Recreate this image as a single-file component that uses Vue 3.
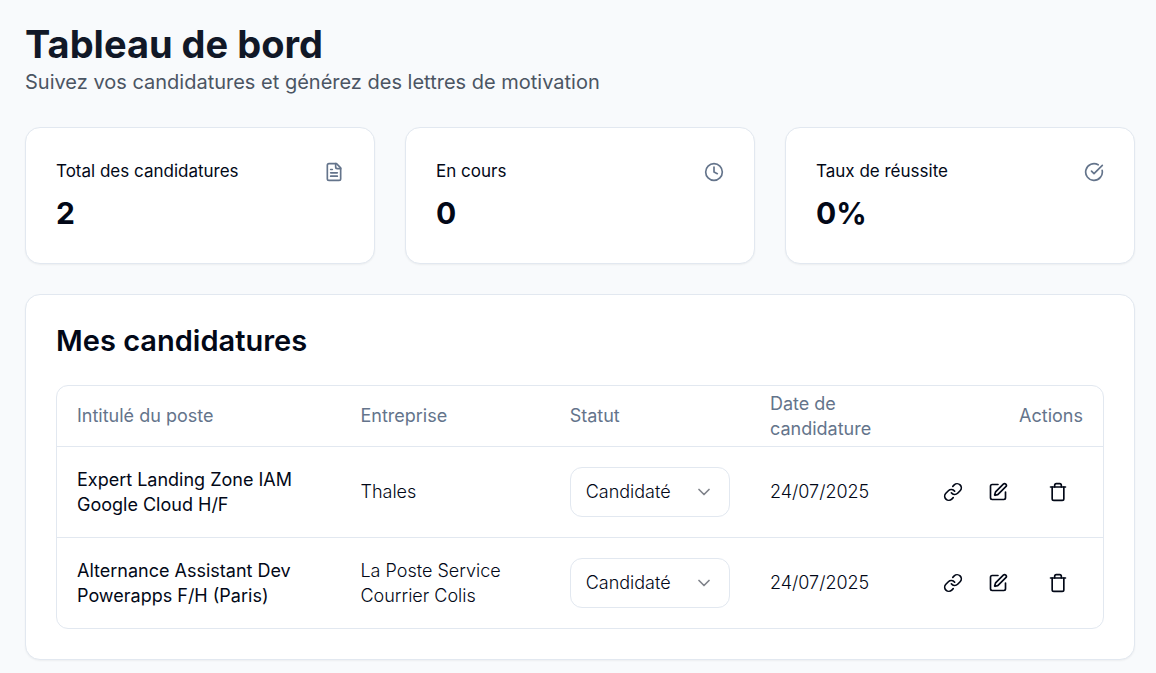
<script setup>
import { ref } from 'vue'
const stats = [
  { label: 'Total des candidatures', value: '2', icon: 'file' },
  { label: 'En cours', value: '0', icon: 'clock' },
  { label: 'Taux de réussite', value: '0%', icon: 'check' },
]
const rows = ref([
  { id: 1, title: 'Expert Landing Zone IAM Google Cloud H/F', company: 'Thales', status: 'Candidaté', date: '24/07/2025' },
  { id: 2, title: 'Alternance Assistant Dev Powerapps F/H (Paris)', company: 'La Poste Service Courrier Colis', status: 'Candidaté', date: '24/07/2025' },
])
const statuses = ['Candidaté', 'Entretien', 'Refusé']
</script>

<template>
  <main class="page">
    <header>
      <h1>Tableau de bord</h1>
      <p class="subtitle">Suivez vos candidatures et générez des lettres de motivation</p>
    </header>
    <section class="stats">
      <article v-for="s in stats" :key="s.label" class="card stat">
        <div class="stat-head">
          <h2>{{ s.label }}</h2>
          <svg class="icon muted" viewBox="0 0 24 24">
            <template v-if="s.icon === 'file'">
              <path d="M15 2H6a2 2 0 0 0-2 2v16a2 2 0 0 0 2 2h12a2 2 0 0 0 2-2V7Z" />
              <path d="M14 2v4a2 2 0 0 0 2 2h4" />
              <path d="M10 9H8M16 13H8M16 17H8" />
            </template>
            <template v-else-if="s.icon === 'clock'">
              <circle cx="12" cy="12" r="10" />
              <path d="M12 6v6l4 2" />
            </template>
            <template v-else>
              <path d="M21.801 10A10 10 0 1 1 17 3.335" />
              <path d="m9 11 3 3L22 4" />
            </template>
          </svg>
        </div>
        <p class="value">{{ s.value }}</p>
      </article>
    </section>
    <section class="card list">
      <h2>Mes candidatures</h2>
      <div class="table-box">
        <table>
          <colgroup>
            <col class="c-title" /><col class="c-company" /><col class="c-status" /><col class="c-date" /><col />
          </colgroup>
          <thead>
            <tr>
              <th>Intitulé du poste</th>
              <th>Entreprise</th>
              <th>Statut</th>
              <th>Date de candidature</th>
              <th class="right">Actions</th>
            </tr>
          </thead>
          <tbody>
            <tr v-for="r in rows" :key="r.id">
              <td class="title">{{ r.title }}</td>
              <td>{{ r.company }}</td>
              <td>
                <div class="select-wrap">
                  <select v-model="r.status" :aria-label="'Statut de ' + r.title">
                    <option v-for="o in statuses" :key="o">{{ o }}</option>
                  </select>
                  <svg class="icon chevron" viewBox="0 0 24 24"><path d="m6 9 6 6 6-6" /></svg>
                </div>
              </td>
              <td>{{ r.date }}</td>
              <td class="action-cell">
                <div class="actions">
                  <a href="#" aria-label="Ouvrir l'offre">
                    <svg class="icon" viewBox="0 0 24 24">
                      <path d="M10 13a5 5 0 0 0 7.54.54l3-3a5 5 0 0 0-7.07-7.07l-1.72 1.71" />
                      <path d="M14 11a5 5 0 0 0-7.54-.54l-3 3a5 5 0 0 0 7.07 7.07l1.71-1.71" />
                    </svg>
                  </a>
                  <button type="button" class="edit" aria-label="Modifier">
                    <svg class="icon" viewBox="0 0 24 24">
                      <path d="M12 3H5a2 2 0 0 0-2 2v14a2 2 0 0 0 2 2h14a2 2 0 0 0 2-2v-7" />
                      <path d="M18.375 2.625a1 1 0 0 1 3 3l-9.013 9.014a2 2 0 0 1-.853.505l-2.873.84a.5.5 0 0 1-.62-.62l.84-2.873a2 2 0 0 1 .506-.852z" />
                    </svg>
                  </button>
                  <button type="button" class="delete" aria-label="Supprimer">
                    <svg class="icon" viewBox="0 0 24 24">
                      <path d="M3 6h18" />
                      <path d="M19 6v14a2 2 0 0 1-2 2H7a2 2 0 0 1-2-2V6" />
                      <path d="M8 6V4a2 2 0 0 1 2-2h4a2 2 0 0 1 2 2v2" />
                    </svg>
                  </button>
                </div>
              </td>
            </tr>
          </tbody>
        </table>
      </div>
    </section>
  </main>
</template>

<style>
body {
  background: #f8fafc;
}
</style>

<style scoped>
* {
  box-sizing: border-box;
}
.page {
  padding: 20px 21px 13px 25px;
  font-family: Inter, "Liberation Sans", sans-serif;
  font-size: 18px;
  line-height: 25px;
  color: #020817;
}
h1, h2, p {
  margin: 0;
}
h1 {
  font-size: 38px;
  line-height: 48px;
  font-weight: 700;
  color: #111827;
}
.subtitle {
  margin-top: 2px;
  font-size: 20px;
  line-height: 24px;
  color: #4b5563;
}
.card {
  background: #fff;
  border: 1px solid #e2e8f0;
  border-radius: 15px;
  box-shadow: 0 1px 2px rgba(0, 0, 0, 0.05);
}
.stats {
  display: grid;
  grid-template-columns: repeat(3, 1fr);
  gap: 30px;
  margin: 33px 0 30px;
}
.stat {
  padding: 30px;
}
.stat-head {
  display: flex;
  align-items: center;
  justify-content: space-between;
  padding-bottom: 8px;
}
.stat-head h2 {
  font-size: 17px;
  line-height: 27px;
  font-weight: 400;
}
.value {
  font-size: 30px;
  line-height: 40px;
  font-weight: 700;
}
.icon {
  display: block;
  width: 20px;
  height: 20px;
  fill: none;
  stroke: currentColor;
  stroke-width: 2;
  stroke-linecap: round;
  stroke-linejoin: round;
}
.muted {
  color: #64748b;
}
.list {
  padding: 30px;
}
.list h2 {
  font-size: 29px;
  line-height: 32px;
  font-weight: 600;
  margin-bottom: 28px;
}
.table-box {
  border: 1px solid #e2e8f0;
  border-radius: 12px;
}
table {
  width: 100%;
  table-layout: fixed;
  border-collapse: collapse;
}
.c-title {
  width: 27.1%;
}
.c-company {
  width: 20%;
}
.c-status {
  width: 19.15%;
}
.c-date {
  width: 14.4%;
}
th {
  height: 60px;
  padding: 0 20px;
  text-align: left;
  font-weight: 400;
  color: #64748b;
}
th.right {
  text-align: right;
}
td {
  padding: 20px;
  font-weight: 300;
}
tbody tr {
  border-top: 1px solid #e2e8f0;
}
.title {
  font-weight: 400;
}
.select-wrap {
  position: relative;
}
select {
  display: block;
  appearance: none;
  width: 100%;
  height: 50px;
  padding: 0 40px 0 15px;
  border: 1px solid #e2e8f0;
  border-radius: 12px;
  background: #fff;
  font: inherit;
  color: inherit;
}
.chevron {
  position: absolute;
  top: 15px;
  right: 16px;
  opacity: 0.5;
  pointer-events: none;
}
.action-cell {
  padding: 0 20px 0 0;
}
.actions {
  display: flex;
  justify-content: flex-end;
}
.actions a,
.actions button {
  display: flex;
  align-items: center;
  justify-content: center;
  width: 50px;
  height: 45px;
  padding: 0;
  border: 0;
  background: none;
  color: inherit;
}
.actions a {
  width: 40px;
}
.actions .delete {
  margin-left: 10px;
}
</style>
